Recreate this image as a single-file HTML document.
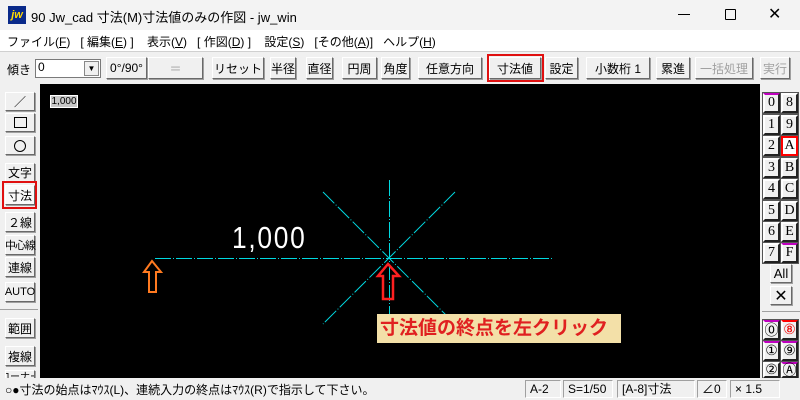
<!DOCTYPE html>
<html><head><meta charset="utf-8"><style>
*{margin:0;padding:0;box-sizing:border-box}
body{width:800px;height:400px;overflow:hidden;background:#f0f0f0;font-family:"Liberation Sans","Noto Sans CJK JP",sans-serif;position:relative;font-size:12px;color:#000}
.a{position:absolute}
.btn{position:absolute;background:#f0f0f0;border:1px solid;border-color:#fff #696969 #696969 #fff;box-shadow:1px 1px 0 #a0a0a0;display:flex;align-items:center;justify-content:center;font-size:12px;white-space:nowrap}
.rb{position:absolute;width:17px;height:20px;background:#f0f0f0;border:2px solid;border-color:#fff #222 #222 #fff;outline:1px solid #555;font-family:"Liberation Serif",serif;font-size:14px;display:flex;align-items:center;justify-content:center}
.sb{position:absolute;top:380px;height:18px;border:1px solid;border-color:#a0a0a0 #fff #fff #a0a0a0;font-size:12px;line-height:16px;padding-left:4px}
</style></head><body>
<div class="a" style="left:0;top:0;width:800px;height:30px;background:#f3f3f3"></div>
<div class="a" style="left:8px;top:6px;width:18px;height:18px;background:#0a2a8a;color:#ffd800;font-weight:bold;font-style:italic;font-size:11px;line-height:18px;text-align:center">jw</div>
<div class="a" style="left:31px;top:7px;font-size:13px">90 Jw_cad 寸法(M)寸法値のみの作図 - jw_win</div>
<div class="a" style="left:678px;top:14px;width:12px;height:1px;background:#000"></div>
<div class="a" style="left:725px;top:9px;width:11px;height:11px;border:1px solid #000;border-radius:1px"></div>
<div class="a" style="left:768px;top:4px;font-size:16px">✕</div>
<div class="a" style="left:0;top:30px;width:800px;height:21px;background:#fff"></div>
<div class="a" style="left:7px;top:33px;font-size:12px">ファイル(<u>F</u>)&nbsp;&nbsp;&nbsp;[ 編集(<u>E</u>) ]&nbsp;&nbsp;&nbsp;&nbsp;表示(<u>V</u>)&nbsp;&nbsp;&nbsp;[ 作図(<u>D</u>) ]&nbsp;&nbsp;&nbsp;&nbsp;設定(<u>S</u>)&nbsp;&nbsp;&nbsp;[その他(<u>A</u>)]&nbsp;&nbsp;&nbsp;ヘルプ(<u>H</u>)</div>
<div class="a" style="left:0;top:51px;width:800px;height:1px;background:#d0d0d0"></div>
<div class="a" style="left:7px;top:61px">傾き</div>
<div class="a" style="left:35px;top:59px;width:66px;height:19px;background:#fff;border:1px solid #7a7a7a;padding-left:2px;font-size:12px">0</div>
<div class="a" style="left:84px;top:61px;width:15px;height:15px;background:#f0f0f0;border:1px solid #888;font-size:8px;text-align:center;line-height:14px">▼</div>
<div class="btn" style="left:106px;top:57px;width:41px;height:22px">0°/90°</div>
<div class="btn" style="left:148px;top:57px;width:55px;height:22px;color:#a0a0a0">＝</div>
<div class="btn" style="left:212px;top:57px;width:52px;height:22px">リセット</div>
<div class="btn" style="left:270px;top:57px;width:26px;height:22px">半径</div>
<div class="btn" style="left:306px;top:57px;width:27px;height:22px">直径</div>
<div class="btn" style="left:342px;top:57px;width:35px;height:22px">円周</div>
<div class="btn" style="left:381px;top:57px;width:29px;height:22px">角度</div>
<div class="btn" style="left:418px;top:57px;width:64px;height:22px">任意方向</div>
<div class="btn" style="left:489px;top:57px;width:52px;height:22px">寸法値</div>
<div class="a" style="left:487px;top:54px;width:57px;height:28px;border:2px solid #e01010"></div>
<div class="btn" style="left:545px;top:57px;width:33px;height:22px">設定</div>
<div class="btn" style="left:586px;top:57px;width:64px;height:22px">小数桁 1</div>
<div class="btn" style="left:656px;top:57px;width:34px;height:22px">累進</div>
<div class="btn" style="left:695px;top:57px;width:58px;height:22px;color:#a0a0a0">一括処理</div>
<div class="btn" style="left:760px;top:57px;width:30px;height:22px;color:#a0a0a0">実行</div>
<div class="a" style="left:40px;top:84px;width:720px;height:294px;background:#000"></div>
<div class="a" style="left:50px;top:95px;width:28px;height:13px;background:#c8c8c8;border:1px solid #fff;font-size:10px;line-height:11px;text-align:center">1,000</div>
<svg class="a" style="left:0;top:0" width="800" height="400">
<g stroke="#00d8e0" stroke-width="1" stroke-dasharray="16,2,1,2" fill="none">
<line x1="155" y1="258.5" x2="553" y2="258.5"/>
<line x1="389.5" y1="180" x2="389.5" y2="330"/>
<line x1="323" y1="192" x2="455" y2="324"/>
<line x1="455" y1="192" x2="323" y2="324"/>
</g>
<polygon points="152,261 161,272 156,272 156,292 149,292 149,272 144,272" fill="none" stroke="#ff7a20" stroke-width="2"/>
<polygon points="388,264 399,276 393,276 393,299 383,299 383,276 378,276" fill="none" stroke="#ff2020" stroke-width="2.5"/>
</svg>
<div class="a" style="left:232px;top:221px;color:#fff;font-size:31px;line-height:34px;transform:scaleX(0.85);transform-origin:0 0;letter-spacing:2px">1,000</div>
<div class="a" style="left:377px;top:314px;width:244px;height:29px;background:#f3e0a8;color:#e02020;font-weight:bold;font-size:19px;line-height:29px;padding-left:3px;white-space:nowrap">寸法値の終点を左クリック</div>
<div class="btn" style="left:5px;top:92px;width:30px;height:19px">／</div>
<div class="btn" style="left:5px;top:113px;width:30px;height:19px"><span style="display:inline-block;width:13px;height:11px;border:1px solid #000"></span></div>
<div class="btn" style="left:5px;top:136px;width:30px;height:19px"><span style="display:inline-block;width:12px;height:12px;border:1px solid #000;border-radius:50%"></span></div>
<div class="btn" style="left:5px;top:163px;width:30px;height:19px">文字</div>
<div class="btn" style="left:5px;top:185px;width:30px;height:20px;background:#fafafa">寸法</div>
<div class="a" style="left:2px;top:181px;width:35px;height:28px;border:2px solid #e01010"></div>
<div class="btn" style="left:5px;top:212px;width:30px;height:20px">２線</div>
<div class="btn" style="left:5px;top:235px;width:30px;height:20px;font-size:11px;letter-spacing:-1px">中心線</div>
<div class="btn" style="left:5px;top:257px;width:30px;height:20px">連線</div>
<div class="btn" style="left:5px;top:282px;width:30px;height:20px;font-size:11px">AUTO</div>
<div class="a" style="left:0;top:309px;width:38px;height:1px;background:#a0a0a0"></div>
<div class="btn" style="left:5px;top:318px;width:30px;height:20px">範囲</div>
<div class="btn" style="left:5px;top:346px;width:30px;height:20px">複線</div>
<div class="btn" style="left:5px;top:370px;width:30px;height:10px;overflow:hidden;font-size:10px">コーナー</div>
<div class="rb" style="left:763px;top:93px;border-top-color:#c000c0">0</div><div class="rb" style="left:781px;top:93px">8</div>
<div class="rb" style="left:763px;top:115px">1</div><div class="rb" style="left:781px;top:115px">9</div>
<div class="rb" style="left:763px;top:136px">2</div><div class="rb" style="left:781px;top:136px;background:#fff;border-color:#f00">A</div>
<div class="rb" style="left:763px;top:158px">3</div><div class="rb" style="left:781px;top:158px">B</div>
<div class="rb" style="left:763px;top:179px">4</div><div class="rb" style="left:781px;top:179px">C</div>
<div class="rb" style="left:763px;top:201px">5</div><div class="rb" style="left:781px;top:201px">D</div>
<div class="rb" style="left:763px;top:222px">6</div><div class="rb" style="left:781px;top:222px">E</div>
<div class="rb" style="left:763px;top:243px">7</div><div class="rb" style="left:781px;top:243px;border-top-color:#c000c0">F</div>
<div class="btn" style="left:770px;top:264px;width:22px;height:19px;font-size:13px">All</div>
<div class="btn" style="left:770px;top:286px;width:22px;height:19px;font-size:16px">✕</div>
<div class="a" style="left:762px;top:311px;width:38px;height:1px;background:#a0a0a0"></div>
<div class="rb" style="left:763px;top:320px;border-top-color:#c000c0">⓪</div><div class="rb" style="left:781px;top:320px;color:#e00;border-top-color:#f00">⑧</div>
<div class="rb" style="left:763px;top:341px;border-top-color:#c000c0">①</div><div class="rb" style="left:781px;top:341px;border-top-color:#c000c0">⑨</div>
<div class="rb" style="left:763px;top:362px;height:16px">②</div><div class="rb" style="left:781px;top:362px;height:16px;border-top-color:#c000c0">Ⓐ</div>
<div class="a" style="left:0;top:378px;width:800px;height:22px;background:#f0f0f0"></div>
<div class="a" style="left:5px;top:381px;font-size:12px">○●寸法の始点はﾏｳｽ(L)、連続入力の終点はﾏｳｽ(R)で指示して下さい。</div>
<div class="sb" style="left:525px;width:36px">A-2</div>
<div class="sb" style="left:563px;width:50px">S=1/50</div>
<div class="sb" style="left:617px;width:78px">[A-8]寸法</div>
<div class="sb" style="left:697px;width:30px">∠0</div>
<div class="sb" style="left:730px;width:50px">× 1.5</div>
</body></html>
